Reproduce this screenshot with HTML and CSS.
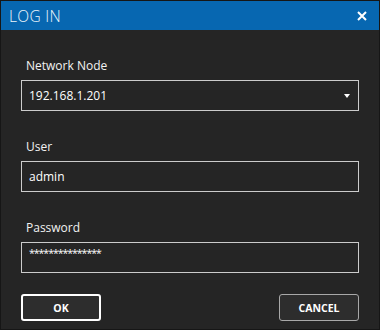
FILE: index.html
```html
<!DOCTYPE html>
<html lang="en">
  <head>
    <meta charset="UTF-8" />
    <title>Log in</title>
    <link rel="stylesheet" href="styles.css">
  </head>
  <body>
    <div class="vindue">
      <header class="titel">
        <h1>LOG IN</h1>
        <button class="luk" aria-label="Luk">
          <svg width="10" height="10" viewBox="0 0 10 10">
            <path d="M1 1 L9 9 M9 1 L1 9" stroke="#fff" stroke-width="2" />
          </svg>
        </button>
      </header>

      <main class="indhold">
        <div class="felt">
          <label>Network Node</label>
          <div class="boks valg">
            <span>192.168.1.201</span>
            <span class="pil"></span>
          </div>
        </div>

        <div class="felt">
          <label>User</label>
          <div class="boks">admin</div>
        </div>

        <div class="felt">
          <label>Password</label>
          <div class="boks kode">***************</div>
        </div>

        <nav class="knapper">
          <button class="knap ok">OK</button>
          <button class="knap">CANCEL</button>
        </nav>
      </main>
    </div>
  </body>
</html>
```

FILE: styles.css
```css
body {
  margin: 0;
  background-color: #252525;
  font-family: "Open Sans", "Noto Sans", sans-serif;
}

.vindue {
  width: 378px;
  height: 328px;
  border: 1px solid #161616;
  background-color: #252525;
  display: flex;
  flex-direction: column;
}

.titel {
  height: 29px;
  background-color: #0767b1;
  display: flex;
  align-items: center;
  justify-content: space-between;
  padding: 0 12px 0 8px;
}

.titel h1 {
  margin: 0;
  font-weight: 300;
  font-size: 15.5px;
  color: #eef6fb;
  letter-spacing: 0.3px;
}

.luk {
  background: none;
  border: none;
  padding: 0;
  display: flex;
}

.indhold {
  padding: 27px 20px 0 20px;
  display: flex;
  flex-direction: column;
  gap: 27px;
}

.felt {
  display: flex;
  flex-direction: column;
  gap: 5px;
}

.felt label {
  color: #f2f2f2;
  font-size: 12px;
  line-height: 18px;
  padding-left: 5px;
}

.boks {
  height: 29px;
  border: 1px solid #cccccc;
  color: #ffffff;
  font-size: 12px;
  display: flex;
  align-items: center;
  padding: 0 7px;
}

.valg {
  justify-content: space-between;
}

.pil {
  width: 0;
  height: 0;
  border-left: 3.5px solid transparent;
  border-right: 3.5px solid transparent;
  border-top: 4px solid #ffffff;
  margin-right: 1px;
}

.kode {
  align-items: flex-start;
  padding-top: 3px;
  height: 26px;
  font-size: 10.5px;
  letter-spacing: -1px;
}

.knapper {
  display: flex;
  justify-content: space-between;
  margin-top: -6px;
}

.knap {
  width: 80px;
  height: 27px;
  background-color: #2d2d2d;
  border: 1px solid #a8a8a8;
  border-radius: 3px;
  color: #ffffff;
  font-family: "Open Sans", "Noto Sans", sans-serif;
  font-weight: 700;
  font-size: 10.5px;
}

.ok {
  border: 2px solid #ffffff;
}
```
